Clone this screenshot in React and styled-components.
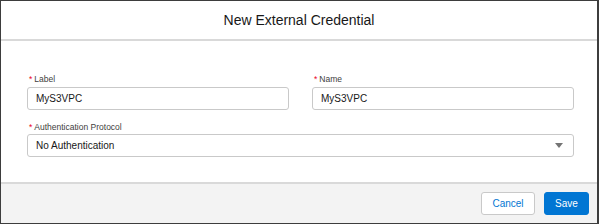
import React from "react";
import styled, { createGlobalStyle } from "styled-components";

const Global = createGlobalStyle`
  html, body { margin: 0; padding: 0; background: #3e3e3e; }
  body { font-family: "Liberation Sans", Arial, sans-serif; }
  * { box-sizing: border-box; }
`;

const Frame = styled.div`
  width: 599px;
  height: 224px;
  border-style: solid;
  border-color: #3d3d3d;
  border-width: 1px 2px 1px 1px;
  background: #fff;
  display: flex;
  flex-direction: column;
`;

const Header = styled.header`
  height: 40px;
  flex: none;
  display: flex;
  align-items: center;
  justify-content: center;
  border-bottom: 2px solid #d9d9d9;
`;

const Title = styled.h2`
  margin: 0;
  font-size: 14px;
  font-weight: 400;
  color: #181818;
`;

const Body = styled.div`
  flex: 1;
  padding: 33px 23px 0 26px;
  display: flex;
  flex-direction: column;
  gap: 12px;
`;

const Row = styled.div`
  display: grid;
  grid-template-columns: ${(p) => (p.$cols === 2 ? "1fr 1fr" : "1fr")};
  column-gap: 23px;
`;

const Field = styled.div`
  display: flex;
  flex-direction: column;
`;

const Label = styled.label`
  font-size: 8.5px;
  line-height: 11px;
  color: #3e3e3c;
  margin-bottom: 1.5px;
  padding-left: 2px;
`;

const Req = styled.abbr`
  color: #ea001e;
  text-decoration: none;
  margin-right: 2px;
`;

const Input = styled.div`
  height: 23px;
  border: 1px solid #c9c9c9;
  border-radius: 3px;
  background: #fff;
  display: flex;
  align-items: center;
  padding: 0 10px 0 8px;
  font-size: 10px;
  color: #181818;
  justify-content: space-between;
`;

const Footer = styled.footer`
  height: 41px;
  flex: none;
  border-top: 2px solid #d9d9d9;
  background: #f3f3f3;
  display: flex;
  align-items: center;
  justify-content: flex-end;
  gap: 9px;
  padding: 0 8px 0 0;
`;

const Button = styled.button`
  height: 23px;
  width: ${(p) => p.$w}px;
  border-radius: 3px;
  font-family: inherit;
  font-size: 10px;
  padding: 0;
  cursor: pointer;
  border: 1px solid ${(p) => (p.$brand ? "#0176d3" : "#c9c9c9")};
  background: ${(p) => (p.$brand ? "#0176d3" : "#fff")};
  color: ${(p) => (p.$brand ? "#fff" : "#0176d3")};
`;

const Arrow = () => (
  <svg width="8" height="5" viewBox="0 0 8 5">
    <path d="M0 0 H8 L4 5 Z" fill="#747474" />
  </svg>
);

export default function App() {
  return (
    <>
      <Global />
      <Frame>
        <Header>
          <Title>New External Credential</Title>
        </Header>
        <Body>
          <Row $cols={2}>
            <Field>
              <Label><Req>*</Req>Label</Label>
              <Input>MyS3VPC</Input>
            </Field>
            <Field>
              <Label><Req>*</Req>Name</Label>
              <Input>MyS3VPC</Input>
            </Field>
          </Row>
          <Row>
            <Field>
              <Label><Req>*</Req>Authentication Protocol</Label>
              <Input>
                No Authentication
                <Arrow />
              </Input>
            </Field>
          </Row>
        </Body>
        <Footer>
          <Button $w={54}>Cancel</Button>
          <Button $w={45} $brand>Save</Button>
        </Footer>
      </Frame>
    </>
  );
}
